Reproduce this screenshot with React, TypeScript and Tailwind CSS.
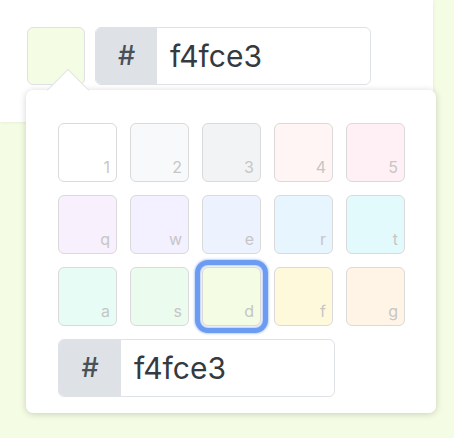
import React from 'react';

const SWATCHES: Array<{ color: string; key: string }> = [
  { color: '#ffffff', key: '1' },
  { color: '#f8f9fa', key: '2' },
  { color: '#f1f3f5', key: '3' },
  { color: '#fff5f5', key: '4' },
  { color: '#fff0f6', key: '5' },
  { color: '#f8f0fc', key: 'q' },
  { color: '#f3f0ff', key: 'w' },
  { color: '#edf2ff', key: 'e' },
  { color: '#e7f5ff', key: 'r' },
  { color: '#e3fafc', key: 't' },
  { color: '#e6fcf5', key: 'a' },
  { color: '#ebfbee', key: 's' },
  { color: '#f4fce3', key: 'd' },
  { color: '#fff9db', key: 'f' },
  { color: '#fff4e6', key: 'g' },
];

const ACTIVE = '#f4fce3';

function HexInput({ prefixW, padL }: { prefixW: string; padL: string }) {
  return (
    <div className="flex h-[58px] overflow-hidden rounded-[6px] border-[1.5px] border-[#dee2e6] bg-white">
      <div
        className={`${prefixW} flex items-center justify-center bg-[#dee2e6] text-[27px] font-medium text-[#495057]`}
      >
        #
      </div>
      <div className={`flex flex-1 items-center ${padL} text-[30px] text-[#343a40]`}>f4fce3</div>
    </div>
  );
}

export default function App() {
  return (
    <div
      className="relative h-[438px] w-[454px] overflow-hidden bg-[#f4fce3]"
      style={{ fontFamily: 'Inter, "Liberation Sans", Arial, sans-serif' }}
    >
      <div className="h-[122px] w-[433px] bg-white pl-[27px] pt-[27px] shadow-[0_0_4px_rgba(0,0,0,0.08)]">
        <div className="flex items-start gap-[10px]">
          <div className="h-[58px] w-[58px] rounded-[6px] border-[1.5px] border-[#dee2e6] bg-[#f4fce3]" />
          <div className="w-[276px]">
            <HexInput prefixW="w-[61px]" padL="pl-[13px]" />
          </div>
        </div>
      </div>

      <div className="absolute left-[26px] top-[90px] w-[410px] rounded-[7px] bg-white pb-[16px] pl-[32px] pt-[33px] shadow-[0_1px_7px_rgba(0,0,0,0.18)]">
        <div className="absolute left-[27px] top-[-15px] h-[30px] w-[30px] rotate-45 border-l border-t border-[#e3e3e3] bg-white" />
        <div className="relative grid w-[347px] grid-cols-5 gap-[13px]">
          {SWATCHES.map((s) => {
            const active = s.color === ACTIVE;
            return (
              <div
                key={s.key}
                className={`relative h-[59px] w-[59px] rounded-[6px] border-[1.5px] border-[#dadada] ${
                  active
                    ? 'shadow-[0_0_0_1px_#e8eefb,0_0_0_2px_#c9dafa,0_0_0_7px_#6c9cf2,0_0_2px_8px_rgba(108,156,242,0.45)]'
                    : ''
                }`}
                style={{ backgroundColor: s.color }}
              >
                <span className="absolute bottom-[6px] right-[6px] text-[16px] leading-none text-[#c6c6c6]">
                  {s.key}
                </span>
              </div>
            );
          })}
        </div>
        <div className="relative mt-[13px] w-[277px]">
          <HexInput prefixW="w-[62px]" padL="pl-[13px]" />
        </div>
      </div>
    </div>
  );
}
